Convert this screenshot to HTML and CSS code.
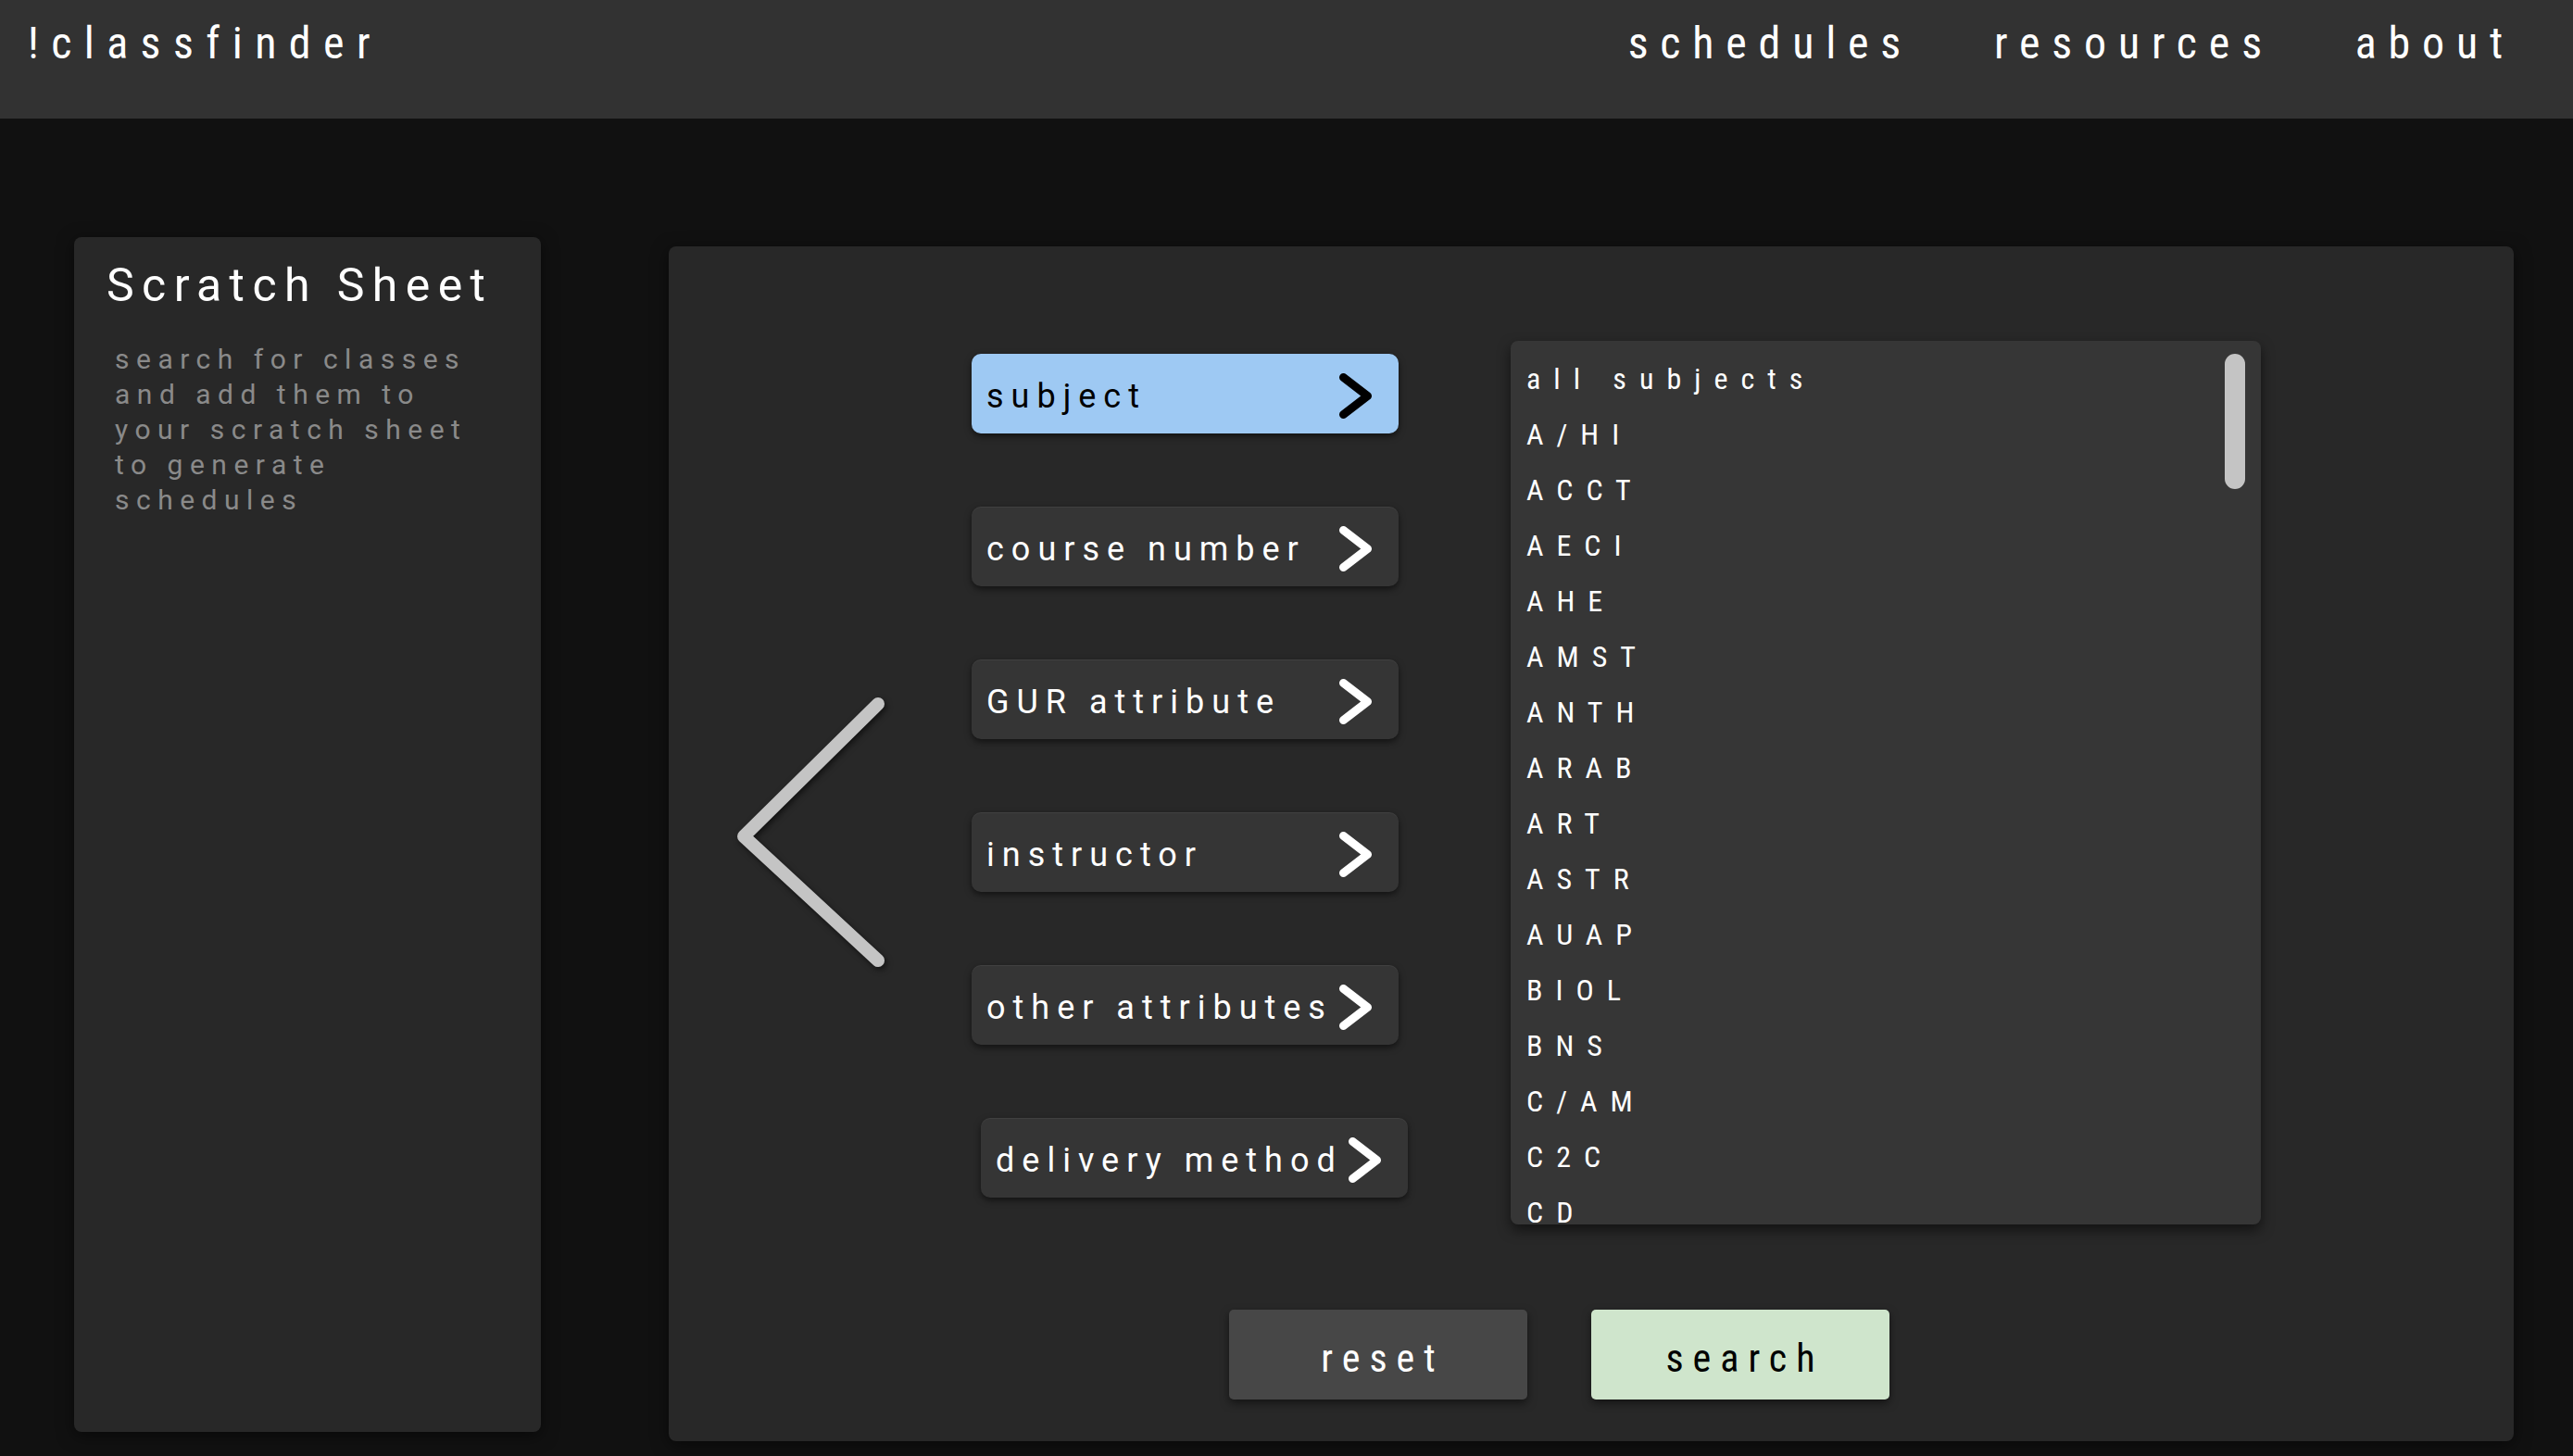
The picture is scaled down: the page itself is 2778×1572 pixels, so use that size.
FILE: index.html
```html
<!DOCTYPE html>
<html lang="en">
<head>
<meta charset="utf-8">
<title>!classfinder</title>
<link rel="stylesheet" href="styles.css">
</head>
<body>
<header class="topbar">
  <div class="logo cond">!classfinder</div>
  <nav class="nav cond">
    <a href="#">schedules</a>
    <a href="#">resources</a>
    <a href="#">about</a>
  </nav>
</header>
<main class="content">
  <aside class="scratch">
    <h2 class="scratch-title">Scratch Sheet</h2>
    <p class="scratch-desc">search for classes and add them to your scratch sheet to generate schedules</p>
  </aside>
  <section class="finder">
    <div class="finder-row">
      <svg class="back" viewBox="0 0 175 300" aria-hidden="true">
        <polyline points="158,10 13,153 158,287" />
      </svg>
      <div class="filters">
        <button class="filter active"><span class="label">subject</span><svg class="chev" viewBox="0 0 36 50"><polyline points="4.5,4.5 30.5,24.5 4.5,44.5"/></svg></button>
        <button class="filter"><span class="label">course number</span><svg class="chev" viewBox="0 0 36 50"><polyline points="4.5,4.5 30.5,24.5 4.5,44.5"/></svg></button>
        <button class="filter"><span class="label">GUR attribute</span><svg class="chev" viewBox="0 0 36 50"><polyline points="4.5,4.5 30.5,24.5 4.5,44.5"/></svg></button>
        <button class="filter"><span class="label">instructor</span><svg class="chev" viewBox="0 0 36 50"><polyline points="4.5,4.5 30.5,24.5 4.5,44.5"/></svg></button>
        <button class="filter"><span class="label">other attributes</span><svg class="chev" viewBox="0 0 36 50"><polyline points="4.5,4.5 30.5,24.5 4.5,44.5"/></svg></button>
        <button class="filter offset"><span class="label">delivery method</span><svg class="chev" viewBox="0 0 36 50"><polyline points="4.5,4.5 30.5,24.5 4.5,44.5"/></svg></button>
      </div>
      <div class="list">
        <ul class="cond">
          <li>all subjects</li>
          <li>A/HI</li>
          <li>ACCT</li>
          <li>AECI</li>
          <li>AHE</li>
          <li>AMST</li>
          <li>ANTH</li>
          <li>ARAB</li>
          <li>ART</li>
          <li>ASTR</li>
          <li>AUAP</li>
          <li>BIOL</li>
          <li>BNS</li>
          <li>C/AM</li>
          <li>C2C</li>
          <li>CD</li>
        </ul>
        <div class="thumb"></div>
      </div>
    </div>
    <div class="actions">
      <button class="act reset cond">reset</button>
      <button class="act search cond">search</button>
    </div>
  </section>
</main>
</body>
</html>
```
FILE: styles.css
```css
* { box-sizing: border-box; }

html, body {
  margin: 0;
  padding: 0;
}

body {
  width: 2778px;
  height: 1572px;
  overflow: hidden;
  background: #111111;
  color: #ffffff;
  font-family: Roboto, "Noto Sans", sans-serif;
}

.cond {
  font-family: "Roboto Condensed", "Liberation Sans Narrow", Roboto, sans-serif;
  font-stretch: 75%;
}

/* header */
.topbar {
  height: 128px;
  background: #323232;
  display: flex;
  justify-content: space-between;
  align-items: flex-start;
  padding: 23px 63px 0 30px;
}

.logo {
  font-size: 48px;
  line-height: 48px;
  letter-spacing: 13.4px;
}

.nav {
  display: flex;
  gap: 88px;
}

.nav a {
  color: #ffffff;
  text-decoration: none;
  font-size: 48px;
  line-height: 48px;
  letter-spacing: 12.8px;
}

/* content */
.content {
  display: flex;
  align-items: flex-start;
  padding: 128px 0 0 80px;
}

.scratch {
  flex: none;
  width: 504px;
  height: 1290px;
  background: #282828;
  border-radius: 8px;
  box-shadow: 0 4px 18px rgba(0, 0, 0, 0.5);
  padding: 27px 0 0 35px;
}

.scratch-title {
  margin: 0;
  font-weight: 400;
  font-size: 50px;
  line-height: 50px;
  letter-spacing: 8.4px;
  color: #ffffff;
}

.scratch-desc {
  margin: 36px 0 0 9px;
  width: 400px;
  font-size: 30px;
  line-height: 38px;
  letter-spacing: 7.5px;
  color: #8a8a8a;
}

.finder {
  flex: none;
  margin: 10px 0 0 138px;
  width: 1992px;
  height: 1290px;
  background: #282828;
  border-radius: 8px;
  box-shadow: 0 4px 18px rgba(0, 0, 0, 0.5);
  padding-top: 102px;
  display: flex;
  flex-direction: column;
}

.finder-row {
  display: flex;
  align-items: flex-start;
}

.back {
  flex: none;
  width: 175px;
  height: 300px;
  margin: 382px 0 0 68px;
  filter: drop-shadow(2px 3px 3px rgba(0, 0, 0, 0.55));
}

.back polyline {
  fill: none;
  stroke: #c4c4c4;
  stroke-width: 14;
  stroke-linecap: round;
  stroke-linejoin: round;
}

.filters {
  flex: none;
  width: 471px;
  margin: 14px 0 0 84px;
  display: flex;
  flex-direction: column;
  align-items: flex-start;
  gap: 79px;
}

.filter {
  width: 461px;
  height: 86px;
  display: flex;
  align-items: center;
  padding: 6px 28px 0 16px;
  border: 0;
  border-radius: 10px;
  background: #353535;
  box-shadow: inset 0 1px 0 rgba(255, 255, 255, 0.06), 0 3px 7px rgba(0, 0, 0, 0.55);
  color: #ffffff;
  font-family: Roboto, "Noto Sans", sans-serif;
  font-size: 36px;
  letter-spacing: 8px;
  text-align: left;
  cursor: pointer;
}

.filter.offset {
  margin-left: 10px;
}

.filter .label {
  flex: 1;
  white-space: nowrap;
}

.chev {
  flex: none;
  width: 36px;
  height: 50px;
}

.chev polyline {
  fill: none;
  stroke: #ffffff;
  stroke-width: 9;
  stroke-linecap: round;
  stroke-linejoin: round;
}

.filter.active {
  background: #9ec9f3;
  color: #000000;
  box-shadow: 0 3px 7px rgba(0, 0, 0, 0.55);
}

.filter.active .chev polyline {
  stroke: #000000;
}

.list {
  flex: none;
  position: relative;
  margin-left: 111px;
  width: 810px;
  height: 954px;
  overflow: hidden;
  background: #363636;
  border-radius: 8px;
  box-shadow: 0 6px 14px rgba(0, 0, 0, 0.55);
}

.list ul {
  list-style: none;
  margin: 0;
  padding: 11px 0 0 17px;
}

.list li {
  height: 60px;
  line-height: 60px;
  font-size: 32px;
  letter-spacing: 14px;
  white-space: nowrap;
}

.thumb {
  position: absolute;
  top: 14px;
  right: 17px;
  width: 22px;
  height: 146px;
  border-radius: 11px;
  background: #c4c4c4;
}

.actions {
  display: flex;
  gap: 69px;
  margin: 92px 0 0 605px;
}

.act {
  width: 322px;
  height: 97px;
  border: 0;
  border-radius: 5px;
  font-size: 42px;
  letter-spacing: 10px;
  padding: 8px 0 0 10px;
  box-shadow: 0 4px 10px rgba(0, 0, 0, 0.5);
  cursor: pointer;
}

.reset {
  background: #474747;
  color: #ffffff;
}

.search {
  background: #cfe5cc;
  color: #000000;
}
```
